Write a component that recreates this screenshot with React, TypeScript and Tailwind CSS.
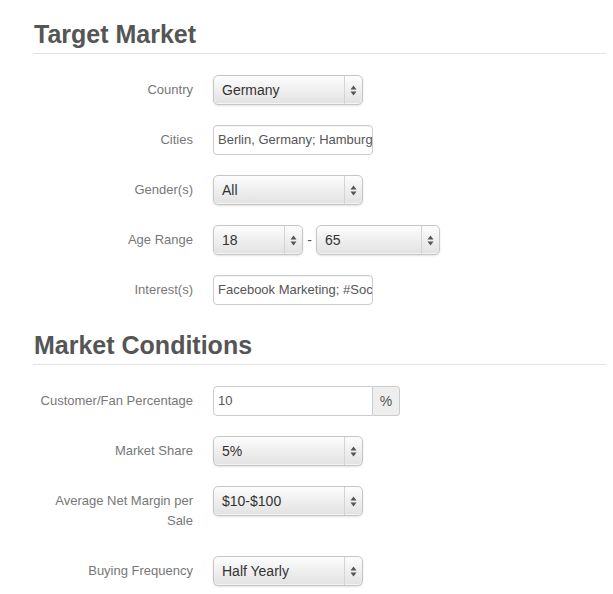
const font = { fontFamily: '"Liberation Sans", Arial, sans-serif' };

function Arrows() {
  return (
    <svg width="7" height="11" viewBox="0 0 7 11" className="block">
      <path d="M3.5 0.5 L6.5 4.5 L0.5 4.5 Z" fill="#555" />
      <path d="M3.5 10.5 L6.5 6.5 L0.5 6.5 Z" fill="#555" />
    </svg>
  );
}

function Select({ value, width = "w-[150px]" }: { value: string; width?: string }) {
  return (
    <div
      className={`${width} flex h-[30px] items-stretch rounded-[5px] border border-[#c6c6c6] bg-gradient-to-b from-[#fdfdfd] via-[#efefef] to-[#e2e2e2] shadow-[0_1px_2px_rgba(0,0,0,0.12),inset_0_-1px_0_rgba(255,255,255,0.6)]`}
    >
      <span className="flex flex-1 items-center pl-[8px] text-[14px] text-[#333]">
        {value}
      </span>
      <span className="flex w-[18px] items-center justify-center border-l border-[#d4d4d4]">
        <Arrows />
      </span>
    </div>
  );
}

function TextInput({ value }: { value: string }) {
  return (
    <div className="flex h-[30px] w-[160px] items-center overflow-hidden whitespace-nowrap rounded-[4px] border border-[#cccccc] bg-white pl-[4px] text-[13px] text-[#555] shadow-[inset_0_1px_1px_rgba(0,0,0,0.05)]">
      {value}
    </div>
  );
}

function Row({ label, children }: { label: string; children: React.ReactNode }) {
  return (
    <div className="flex gap-5">
      <div className="w-[160px] shrink-0 py-[5px] text-right text-[13px] leading-5 text-[#777]">
        {label}
      </div>
      <div className="flex items-start">{children}</div>
    </div>
  );
}

function Heading({ title, className }: { title: string; className: string }) {
  return (
    <h2
      className={`${className} mb-[21px] h-[35px] border-b border-[#e2e2e2] pb-[4px] pl-[1px] text-[25px] font-bold leading-[30px] text-[#555]`}
    >
      {title}
    </h2>
  );
}

export default function App() {
  return (
    <div className="min-h-[594px] w-[613px] bg-white" style={font}>
      <div className="ml-[33px] w-[573px]">
        <Heading title="Target Market" className="pt-[19px] h-[54px]" />
        <div className="flex flex-col gap-5">
          <Row label="Country">
            <Select value="Germany" />
          </Row>
          <Row label="Cities">
            <TextInput value="Berlin, Germany; Hamburg, Germany" />
          </Row>
          <Row label="Gender(s)">
            <Select value="All" />
          </Row>
          <Row label="Age Range">
            <div className="flex items-center">
              <Select value="18" width="w-[90px]" />
              <span className="w-[13px] text-center text-[14px] text-[#555]">-</span>
              <Select value="65" width="w-[124px]" />
            </div>
          </Row>
          <Row label="Interest(s)">
            <TextInput value="Facebook Marketing; #SocialMedia" />
          </Row>
        </div>

        <Heading title="Market Conditions" className="mt-[25px]" />
        <div className="flex flex-col gap-5">
          <Row label="Customer/Fan Percentage">
            <div className="flex">
              <div className="flex h-[30px] w-[160px] items-center rounded-l-[4px] border border-[#cccccc] bg-white pl-[4px] text-[13px] text-[#555]">
                10
              </div>
              <div className="flex h-[30px] w-[27px] items-center justify-center rounded-r-[4px] border border-l-0 border-[#cccccc] bg-[#eeeeee] text-[14px] text-[#555]">
                %
              </div>
            </div>
          </Row>
          <Row label="Market Share">
            <Select value="5%" />
          </Row>
          <Row label="Average Net Margin per Sale">
            <Select value="$10-$100" />
          </Row>
          <Row label="Buying Frequency">
            <Select value="Half Yearly" />
          </Row>
        </div>
      </div>
    </div>
  );
}
